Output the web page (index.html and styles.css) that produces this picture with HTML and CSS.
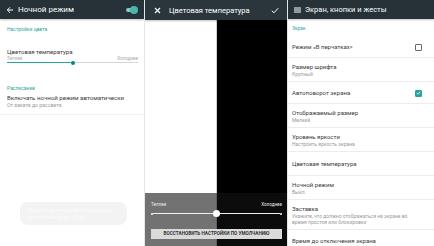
FILE: index.html
```html
<!DOCTYPE html>
<html lang="ru">
<head>
    <meta charset="UTF-8">
    <meta name="viewport" content="width=device-width, initial-scale=1.0">
    <title>Настройки экрана</title>
    <link rel="stylesheet" href="styles.css">
</head>
<body>
    <div class="screens">
        <!-- Ночной режим -->
        <div class="screen night">
            <div class="toolbar">
                <svg class="tb-icon" width="8" height="8" viewBox="0 0 8 8"><path d="M7 4H1.5M4 1.3L1.3 4L4 6.7" stroke="#fff" stroke-width="1" fill="none"/></svg>
                <span class="tb-title">Ночной режим</span>
                <span class="switch"><span class="switch-knob"></span></span>
            </div>
            <div class="section-label">Настройки цвета</div>
            <div class="pref-title temp-title">Цветовая температура</div>
            <div class="range-labels">
                <span>Теплее</span>
                <span>Холоднее</span>
            </div>
            <div class="slider">
                <div class="slider-fill"></div>
                <div class="slider-knob"></div>
                <div class="slider-rest"></div>
            </div>
            <div class="section-label schedule">Расписание</div>
            <div class="auto-row">
                <div class="pref-title">Включать ночной режим автоматически</div>
                <div class="pref-sub">От заката до рассвета</div>
            </div>
            <div class="toast">Ночной режим будет оставаться включенным до 05:40</div>
        </div>

        <!-- Цветовая температура -->
        <div class="screen temp">
            <div class="toolbar toolbar-edit">
                <svg class="tb-icon" width="7" height="7" viewBox="0 0 7 7"><path d="M1 1L6 6M6 1L1 6" stroke="#fff" stroke-width="1.1"/></svg>
                <span class="tb-title">Цветовая температура</span>
                <svg class="tb-check" width="8" height="7" viewBox="0 0 8 7"><path d="M0.8 3.8L2.9 5.8L7.2 1.2" stroke="#fff" stroke-width="1" fill="none"/></svg>
            </div>
            <div class="preview">
                <div class="preview-light"></div>
                <div class="preview-dark"></div>
            </div>
            <div class="temp-sheet">
                <div class="sheet-labels">
                    <span>Теплее</span>
                    <span>Холоднее</span>
                </div>
                <div class="sheet-slider">
                    <span class="sheet-dot"></span>
                    <span class="sheet-line"></span>
                    <span class="sheet-knob"></span>
                    <span class="sheet-line"></span>
                    <span class="sheet-dot"></span>
                </div>
                <div class="reset-btn">ВОССТАНОВИТЬ НАСТРОЙКИ ПО УМОЛЧАНИЮ</div>
            </div>
        </div>

        <!-- Экран, кнопки и жесты -->
        <div class="screen display">
            <div class="toolbar">
                <svg class="tb-icon" width="7" height="6" viewBox="0 0 7 6"><path d="M0 1H7M0 3H7M0 5H7" stroke="#fff" stroke-width="1"/></svg>
                <span class="tb-title">Экран, кнопки и жесты</span>
            </div>
            <div class="section-label list-label">Экран</div>
            <div class="list">
                <div class="item">
                    <div class="item-text"><div class="item-title">Режим «В перчатках»</div></div>
                    <span class="checkbox"></span>
                </div>
                <div class="item">
                    <div class="item-text">
                        <div class="item-title">Размер шрифта</div>
                        <div class="item-sub">Крупный</div>
                    </div>
                </div>
                <div class="item">
                    <div class="item-text"><div class="item-title">Автоповорот экрана</div></div>
                    <span class="checkbox checked">
                        <svg width="6" height="6" viewBox="0 0 6 6"><path d="M1 3.1L2.4 4.4L5 1.6" stroke="#fff" stroke-width="1" fill="none"/></svg>
                    </span>
                </div>
                <div class="item">
                    <div class="item-text">
                        <div class="item-title">Отображаемый размер</div>
                        <div class="item-sub">Мелкий</div>
                    </div>
                </div>
                <div class="item">
                    <div class="item-text">
                        <div class="item-title">Уровень яркости</div>
                        <div class="item-sub">Настроить яркость экрана</div>
                    </div>
                </div>
                <div class="item">
                    <div class="item-text"><div class="item-title">Цветовая температура</div></div>
                </div>
                <div class="item">
                    <div class="item-text">
                        <div class="item-title">Ночной режим</div>
                        <div class="item-sub">Выкл.</div>
                    </div>
                </div>
                <div class="item">
                    <div class="item-text">
                        <div class="item-title">Заставка</div>
                        <div class="item-sub">Укажите, что должно отображаться на экране во время простоя или блокировки</div>
                    </div>
                </div>
                <div class="item">
                    <div class="item-text"><div class="item-title">Время до отключения экрана</div></div>
                </div>
            </div>
        </div>
    </div>
</body>
</html>
```

FILE: styles.css
```css
body {
    margin: 0;
    background: #fff;
    font-family: Roboto, "Noto Sans", Arial, sans-serif;
    overflow: hidden;
}
.screens {
    display: flex;
    gap: 1px;
    height: 246px;
    background: #e6e6e6;
}
.screen {
    position: relative;
    background: #fff;
    overflow: hidden;
    display: flex;
    flex-direction: column;
}
.night {
    width: 144px;
}
.temp {
    width: 142px;
    background: #000;
}
.display {
    width: 146px;
}
.toolbar {
    height: 19px;
    flex: none;
    background: #263238;
    display: flex;
    align-items: center;
    padding: 0 6px 0 6px;
    gap: 4px;
    box-shadow: 0 1px 2px rgba(0,0,0,0.25);
    position: relative;
    z-index: 1;
}
.toolbar-edit {
    height: 20px;
    background: #2b363c;
    padding: 0 8px 0 9px;
    gap: 8px;
}
.tb-icon {
    flex: none;
}
.tb-title {
    color: #fff;
    font-size: 7.5px;
    flex: 1;
    white-space: nowrap;
}
.night .tb-title {
    font-size: 8px;
}
.switch {
    width: 11px;
    height: 4px;
    border-radius: 2px;
    background: #80cbc4;
    position: relative;
    margin-right: 1px;
}
.switch-knob {
    position: absolute;
    right: -1px;
    top: -2px;
    width: 8px;
    height: 8px;
    border-radius: 50%;
    background: #4db6ac;
}
.section-label {
    color: #26a69a;
    font-size: 5px;
    line-height: 6px;
    padding: 7px 7px 0;
}
.pref-title {
    color: #3a3a3a;
    font-size: 6.1px;
    line-height: 8px;
    white-space: nowrap;
}
.pref-sub {
    color: #9a9a9a;
    font-size: 5.2px;
    line-height: 7px;
}
.temp-title {
    padding: 16px 7px 0;
}
.range-labels {
    display: flex;
    justify-content: space-between;
    color: #aaa;
    font-size: 4.6px;
    line-height: 5px;
    padding: 0 6px 0 7px;
}
.slider {
    display: flex;
    align-items: center;
    height: 3px;
    padding: 0 6px 0 7px;
}
.slider-fill {
    width: 64px;
    height: 1px;
    background: #26a69a;
}
.slider-knob {
    width: 4px;
    height: 4px;
    border-radius: 50%;
    background: #00897b;
    flex: none;
}
.slider-rest {
    flex: 1;
    height: 1px;
    background: #d6d6d6;
}
.schedule {
    padding-top: 21px;
}
.auto-row {
    padding: 3px 7px 5px;
    border-bottom: 1px solid #f2f2f2;
}
.toast {
    position: absolute;
    left: 20px;
    top: 202px;
    width: 107px;
    height: 23px;
    box-sizing: border-box;
    padding: 5px 8px;
    border-radius: 8px;
    background: #f3f3f3;
    color: #fbfbfb;
    font-size: 5.5px;
    line-height: 7px;
}
.preview {
    flex: 1;
    display: flex;
}
.preview-light {
    width: 71px;
    background: #fff;
    border-right: 1px solid #d0d0d0;
}
.preview-dark {
    flex: 1;
    background: #000;
}
.temp-sheet {
    position: absolute;
    left: 0;
    right: 0;
    bottom: 0;
    height: 53px;
    background: rgba(20,20,20,0.6);
    padding: 8px 5px 0 6px;
    box-sizing: border-box;
}
.sheet-labels {
    display: flex;
    justify-content: space-between;
    color: #e8e8e8;
    font-size: 4.6px;
    line-height: 7px;
}
.sheet-slider {
    display: flex;
    align-items: center;
    height: 9px;
    margin-top: 1px;
}
.sheet-line {
    flex: 1;
    height: 1px;
    background: #f0f0f0;
}
.sheet-dot {
    width: 2px;
    height: 2px;
    border-radius: 50%;
    background: #fff;
}
.sheet-knob {
    width: 7px;
    height: 7px;
    border-radius: 50%;
    background: #fff;
}
.reset-btn {
    margin-top: 11px;
    height: 10px;
    background: #dadada;
    color: #333;
    font-size: 4.7px;
    font-weight: bold;
    line-height: 10px;
    text-align: center;
    white-space: nowrap;
}
.list-label {
    padding: 7px 4px 4px;
    font-size: 4.6px;
}
.list {
    display: flex;
    flex-direction: column;
}
.item {
    display: flex;
    align-items: center;
    min-height: 22px;
    box-sizing: border-box;
    padding: 5px 12px 4px 4px;
    border-bottom: 1px solid #ececec;
}
.item:nth-child(6) {
    min-height: 24px;
}
.item-text {
    flex: 1;
}
.item-title {
    color: #3a3a3a;
    font-size: 6px;
    line-height: 8px;
    white-space: nowrap;
}
.item-sub {
    color: #9a9a9a;
    font-size: 5px;
    line-height: 6px;
}
.checkbox {
    width: 5px;
    height: 5px;
    border: 1px solid #6a6a6a;
    border-radius: 1px;
    display: flex;
    align-items: center;
    justify-content: center;
}
.checkbox.checked {
    background: #26a69a;
    border-color: #26a69a;
}
```
